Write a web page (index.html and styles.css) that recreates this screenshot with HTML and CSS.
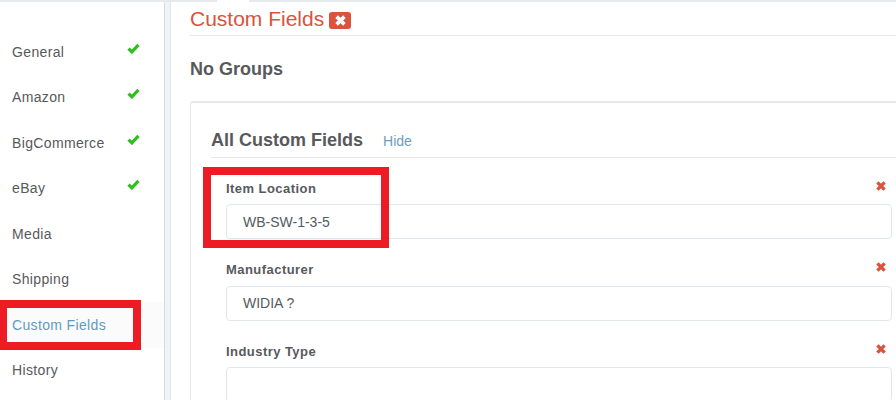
FILE: index.html
```html
<!DOCTYPE html>
<html lang="en">
<head>
<meta charset="utf-8">
<title>Custom Fields</title>
<link rel="stylesheet" href="styles.css">
</head>
<body>
<div class="page">
  <div class="topline"><span class="notch"></span></div>
  <div class="layout">
    <nav class="sidebar">
      <a class="nav-item">General<svg class="check" viewBox="0 0 12 10"><path d="M1.4 5.1 4.5 8.1 10.6 1.7" /></svg></a>
      <a class="nav-item">Amazon<svg class="check" viewBox="0 0 12 10"><path d="M1.4 5.1 4.5 8.1 10.6 1.7" /></svg></a>
      <a class="nav-item">BigCommerce<svg class="check" viewBox="0 0 12 10"><path d="M1.4 5.1 4.5 8.1 10.6 1.7" /></svg></a>
      <a class="nav-item">eBay<svg class="check" viewBox="0 0 12 10"><path d="M1.4 5.1 4.5 8.1 10.6 1.7" /></svg></a>
      <a class="nav-item">Media</a>
      <a class="nav-item">Shipping</a>
      <a class="nav-item active">Custom Fields</a>
      <a class="nav-item">History</a>
    </nav>
    <div class="gutter"></div>
    <main class="content">
      <h1 class="title"><span>Custom Fields</span><span class="badge"><svg class="x" viewBox="0 0 10 10"><path d="M2 2 8 8M8 2 2 8" /></svg></span></h1>
      <h2 class="groups">No Groups</h2>
      <section class="panel">
        <div class="panel-head">
          <h3>All Custom Fields</h3>
          <a class="hide">Hide</a>
        </div>
        <div class="field">
          <div class="field-label"><label>Item Location</label><svg class="remove" viewBox="0 0 10 10"><path d="M2 2 8 8M8 2 2 8" /></svg></div>
          <input class="field-input" type="text" value="WB-SW-1-3-5">
        </div>
        <div class="field">
          <div class="field-label"><label>Manufacturer</label><svg class="remove" viewBox="0 0 10 10"><path d="M2 2 8 8M8 2 2 8" /></svg></div>
          <input class="field-input" type="text" value="WIDIA ?">
        </div>
        <div class="field">
          <div class="field-label"><label>Industry Type</label><svg class="remove" viewBox="0 0 10 10"><path d="M2 2 8 8M8 2 2 8" /></svg></div>
          <input class="field-input" type="text" value="">
        </div>
      </section>
    </main>
  </div>
  <div class="mark mark-nav"></div>
  <div class="mark mark-field"></div>
</div>
</body>
</html>
```
FILE: styles.css
```css
* { box-sizing: border-box; }
html, body { margin: 0; padding: 0; background: #fff; }
body {
  font-family: "Liberation Sans", Arial, sans-serif;
  color: #58595b;
  width: 896px;
  height: 400px;
  overflow: hidden;
}
.page { position: relative; width: 896px; height: 400px; overflow: hidden; }
.topline { height: 2px; background: #e6eaed; position: relative; }
.notch { position: absolute; left: 217px; width: 32px; top: 0; height: 2px; background: #fff; }
.layout { display: flex; height: 398px; }
.sidebar {
  width: 165px;
  flex: none;
  border-right: 1px solid #d5dde3;
  padding-top: 27px;
  display: flex;
  flex-direction: column;
}
.gutter {
  width: 6px;
  flex: none;
  background: #eff3f7;
  border-right: 1px solid #e1e8ee;
}
.nav-item {
  display: flex;
  align-items: center;
  justify-content: space-between;
  height: 45.5px;
  padding: 0 24px 0 12px;
  font-size: 14px;
  letter-spacing: 0.35px;
  color: #58595b;
}
.nav-item.active { color: #5b9bc4; background: #fbfbfb; }
.check { width: 13px; height: 11px; fill: none; stroke: #2fc01f; stroke-width: 3; margin-top: -7px; }
.content {
  flex: 1;
  min-width: 0;
  padding: 0 0 0 19px;
}
.title {
  margin: 0;
  height: 34px;
  font-size: 21px;
  line-height: 36px;
  font-weight: 400;
  color: #d9533d;
  border-bottom: 1px solid #e6e9ec;
  display: flex;
  align-items: center;
  gap: 5px;
}
.badge {
  width: 22px; height: 17px;
  background: #d9533d;
  border-radius: 3px;
  display: inline-flex;
  align-items: center;
  justify-content: center;
  margin-top: 3px;
}
.x { width: 13px; height: 13px; fill: none; stroke: #fff; stroke-width: 2.8; }
.groups {
  margin: 0;
  height: 65px;
  padding-top: 23px;
  font-size: 18px;
  line-height: 20px;
  font-weight: 700;
  color: #58595b;
}
.panel {
  border-top: 2px solid #e2eaec;
  border-left: 1px solid #e2eaec;
  border-top-left-radius: 3px;
  padding: 0 0 0 20px;
  height: 320px;
  width: 740px;
}
.panel-head {
  display: flex;
  align-items: baseline;
  height: 55px;
  padding-top: 27px;
  border-bottom: 1px solid #e6e9ec;
}
.panel-head h3 { margin: 0; font-size: 18px; line-height: 20px; font-weight: 700; color: #58595b; }
.hide { margin-left: 20px; font-size: 14px; color: #6c9dc2; }
.field { padding-left: 15px; width: 681px; height: 81.5px; padding-top: 22px; }
.field-label {
  display: flex;
  justify-content: space-between;
  align-items: center;
  height: 16px;
  padding-right: 5px;
}
.field-label label { font-size: 13px; font-weight: 700; letter-spacing: 0.45px; color: #58595b; }
.remove { width: 12px; height: 12px; fill: none; stroke: #d9533d; stroke-width: 2.8; margin-top: -5px; }
.field-input {
  display: block;
  width: 666px;
  height: 35px;
  margin-top: 8px;
  padding: 0 16px;
  border: 1px solid #e0e8ec;
  border-radius: 4px;
  font: 14px "Liberation Sans", Arial, sans-serif;
  color: #555a60;
  background: #fff;
  outline: none;
}
.mark { position: absolute; border: 8px solid #ed1c24; pointer-events: none; }
.mark-nav { left: 0; top: 300px; width: 141px; height: 50px; border-left-width: 7px; }
.mark-field { left: 203px; top: 167px; width: 186px; height: 81px; }
```
